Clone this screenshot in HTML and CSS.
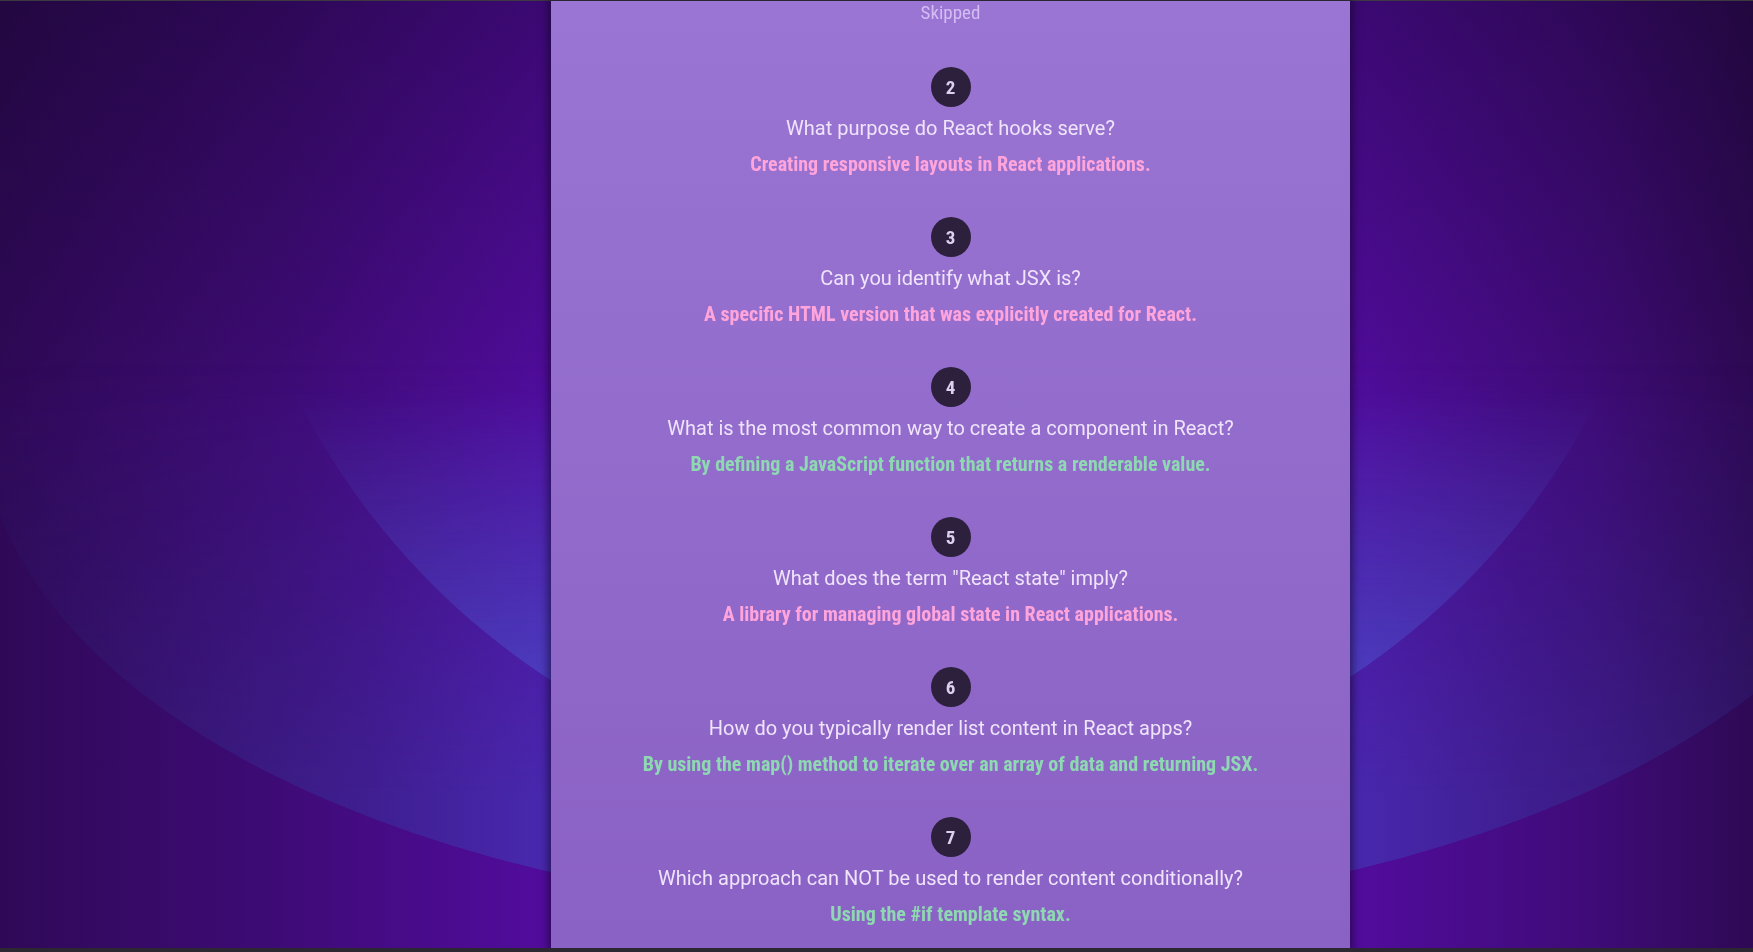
FILE: index.html
```html
<!DOCTYPE html>
<html lang="en">
<head>
<meta charset="utf-8">
<title>Quiz Summary</title>
<link rel="stylesheet" href="styles.css">
</head>
<body>
<div class="page">
  <div class="top-line"></div>
  <div class="stage">
    <main class="summary">
      <ol class="results">
        <li class="result first">
          <p class="answer skipped">Skipped</p>
        </li>
        <li class="result">
          <h3 class="num">2</h3>
          <p class="question">What purpose do React hooks serve?</p>
          <p class="answer wrong">Creating responsive layouts in React applications.</p>
        </li>
        <li class="result">
          <h3 class="num">3</h3>
          <p class="question">Can you identify what JSX is?</p>
          <p class="answer wrong">A specific HTML version that was explicitly created for React.</p>
        </li>
        <li class="result">
          <h3 class="num">4</h3>
          <p class="question">What is the most common way to create a component in React?</p>
          <p class="answer correct">By defining a JavaScript function that returns a renderable value.</p>
        </li>
        <li class="result">
          <h3 class="num">5</h3>
          <p class="question">What does the term "React state" imply?</p>
          <p class="answer wrong">A library for managing global state in React applications.</p>
        </li>
        <li class="result">
          <h3 class="num">6</h3>
          <p class="question">How do you typically render list content in React apps?</p>
          <p class="answer correct">By using the map() method to iterate over an array of data and returning JSX.</p>
        </li>
        <li class="result">
          <h3 class="num">7</h3>
          <p class="question">Which approach can NOT be used to render content conditionally?</p>
          <p class="answer correct">Using the #if template syntax.</p>
        </li>
      </ol>
    </main>
  </div>
  <div class="bottom-bar"></div>
</div>
</body>
</html>
```

FILE: styles.css
```css
html, body {
  margin: 0;
  padding: 0;
  height: 100%;
  overflow: hidden;
}

body {
  font-family: Roboto, "Noto Sans", sans-serif;
  background:
    linear-gradient(to bottom, rgba(0, 0, 0, 0.27) 0, rgba(0, 0, 0, 0) 420px),
    linear-gradient(90deg, #2f0958 0, #3e0b76 280px, #520c9e 551px, #560ca6 948px, #520c9e 1350px, #3e0b76 1600px, #2e0955 1753px);
  position: relative;
}

/* decorative background shapes */
body::before {
  content: "";
  position: fixed;
  left: -17px;
  top: -72px;
  width: 1930px;
  height: 988px;
  border-radius: 50%;
  background: linear-gradient(90deg, rgba(45, 48, 115, 0.22) 0%, rgba(55, 60, 165, 0.4) 20%, rgba(70, 78, 212, 0.6) 40%, rgba(72, 80, 215, 0.62) 50%, rgba(70, 78, 212, 0.6) 60%, rgba(55, 60, 165, 0.4) 80%, rgba(45, 48, 115, 0.22) 100%);
  -webkit-mask-image: linear-gradient(to bottom, transparent 44%, #000 88%);
  mask-image: linear-gradient(to bottom, transparent 44%, #000 88%);
  pointer-events: none;
}

body::after {
  content: "";
  position: fixed;
  left: 218px;
  top: -662px;
  width: 1460px;
  height: 1460px;
  border-radius: 50%;
  background: rgba(78, 105, 225, 0.45);
  -webkit-mask-image: linear-gradient(to bottom, transparent 72%, #000 96%);
  mask-image: linear-gradient(to bottom, transparent 72%, #000 96%);
  pointer-events: none;
}

.page {
  position: relative;
  z-index: 1;
  height: 100%;
  display: flex;
  flex-direction: column;
}

.top-line {
  height: 1px;
  background: #3c3a40;
  flex: none;
}

.stage {
  flex: 1;
  min-height: 0;
  display: flex;
}

.bottom-bar {
  height: 4px;
  flex: none;
  background: #2b2832;
}

.summary {
  width: 799px;
  margin-left: 551px;
  background: linear-gradient(180deg, #9a75d3 0%, #8a61c4 100%);
  box-shadow: 0 0 8px 3px rgba(12, 5, 31, 0.55);
  overflow: hidden;
}

.results {
  list-style: none;
  margin: 0;
  padding: 0;
  text-align: center;
  display: flex;
  flex-direction: column;
  gap: 39px;
}

.result {
  display: flex;
  flex-direction: column;
  align-items: center;
}

.result.first {
  margin-bottom: 3px;
}

.num {
  margin: 0 0 6px;
  width: 40px;
  height: 40px;
  border-radius: 50%;
  background: #2c203d;
  color: #dcd0ef;
  display: flex;
  align-items: center;
  justify-content: center;
  font-family: Roboto, sans-serif;
  font-stretch: 75%;
  font-weight: bold;
  font-size: 19px;
}

.question {
  margin: 0;
  font-family: Roboto, sans-serif;
  font-size: 20px;
  line-height: 30px;
  color: #efe4fb;
}

.answer {
  margin: 8px 0 0;
  font-family: Roboto, sans-serif;
  font-stretch: 75%;
  font-weight: bold;
  font-size: 20px;
  line-height: 27px;
}

.answer.wrong { color: #ffa5dc; }
.answer.correct { color: #8fd9b2; }
.answer.skipped {
  margin: 0;
  font-weight: normal;
  color: #d4bdf3;
  font-size: 19px;
  line-height: 24px;
}
```
